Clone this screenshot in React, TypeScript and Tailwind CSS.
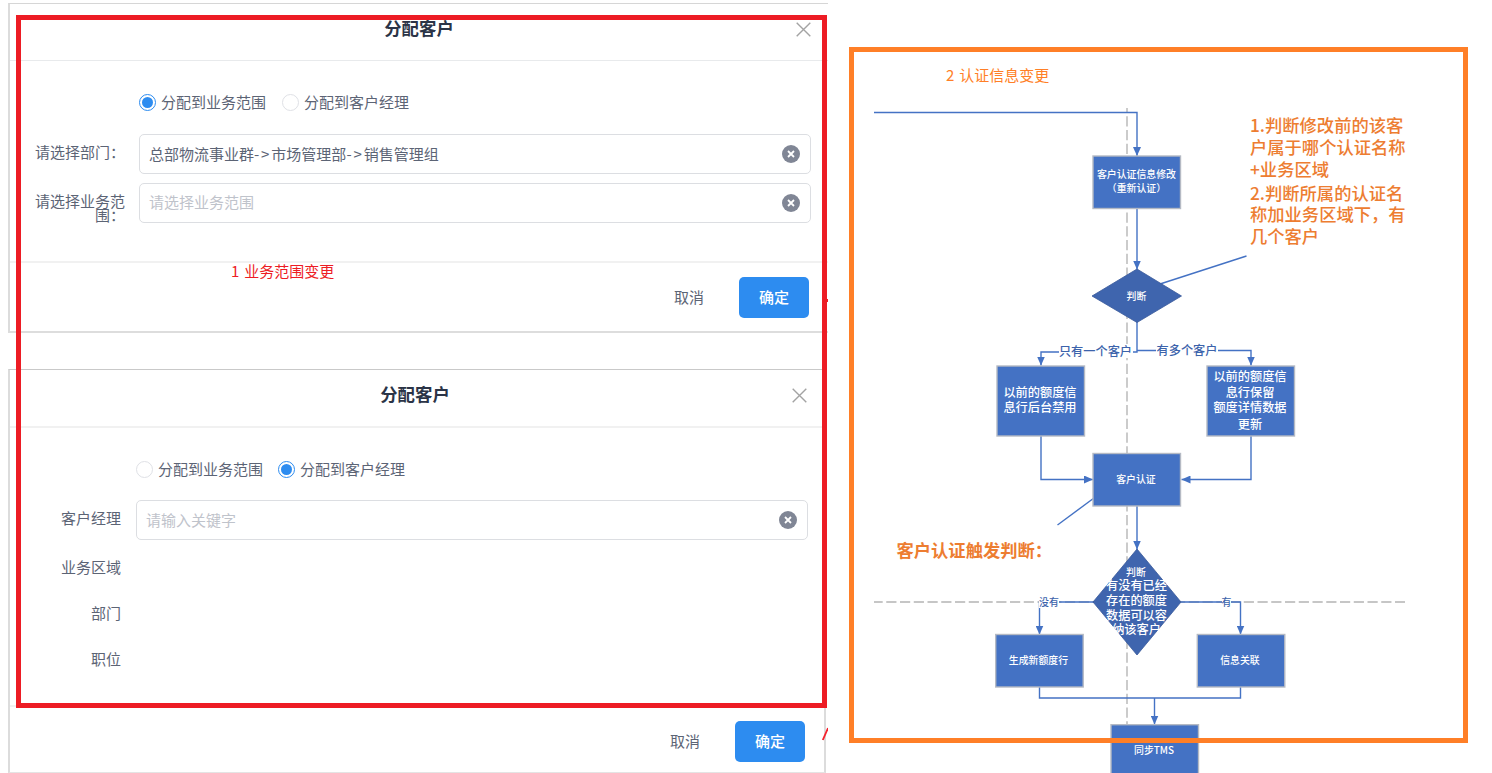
import type { ReactNode } from "react";

const FONT = "font-['Noto_Sans_CJK_SC',sans-serif]";

function Radio({ checked, label }: { checked?: boolean; label: string }) {
  return (
    <label className="flex items-center gap-[5px]">
      <span
        className={
          checked
            ? "flex size-[17px] items-center justify-center rounded-full border border-[#2d8cf0] bg-white"
            : "flex size-[17px] items-center justify-center rounded-full border border-[#dfe1e6] bg-white"
        }
      >
        {checked && <span className="size-[11px] rounded-full bg-[#2d8cf0]" />}
      </span>
      <span>{label}</span>
    </label>
  );
}

function Field({ value, placeholder, raised }: { value?: string[]; placeholder?: string; raised?: boolean }) {
  return (
    <div className="flex h-10 w-[672px] items-center justify-between rounded-[5px] border border-[#dcdee2] pr-[10px] pl-[9px]">
      {value ? (
        <span>
          {value.map((part, i) => (
            <span key={part}>
              {i > 0 && <span className="tracking-[1.9px]">-&gt;</span>}
              {part}
            </span>
          ))}
        </span>
      ) : (
        <span className={raised ? "-mt-px text-[#bfc3cb]" : "mt-px text-[#bfc3cb]"}>{placeholder}</span>
      )}
      <svg width="18" height="18" viewBox="0 0 18 18">
        <circle cx="9" cy="9" r="9" fill="#808695" />
        <path d="M6 6l6 6M12 6l-6 6" stroke="#fff" strokeWidth="1.8" />
      </svg>
    </div>
  );
}

function CloseIcon() {
  return (
    <svg width="15" height="15" viewBox="0 0 15 15">
      <path d="M.7.7l13.6 13.6M14.3.7L.7 14.3" stroke="#a3a3a3" strokeWidth="1.4" fill="none" />
    </svg>
  );
}

function Header({ className }: { className: string }) {
  return (
    <div className={`flex items-center justify-between ${className}`}>
      <span className="w-[15px]" />
      <h2 className="-mt-1 text-[17.4px] leading-5 font-bold text-[#2b3447]">分配客户</h2>
      <CloseIcon />
    </div>
  );
}

function Footer({ className }: { className: string }) {
  return (
    <div className={`flex items-start justify-end ${className}`}>
      <button className="h-[41px] w-[70px] text-[15px]">取消</button>
      <button className="ml-[15px] h-[41px] w-[70px] rounded-[5px] bg-[#2d8cf0] text-[15px] font-medium text-white">
        确定
      </button>
    </div>
  );
}

function Row({ label, className, children }: { label: ReactNode; className: string; children?: ReactNode }) {
  return (
    <div className={`flex ${className}`}>
      {label}
      {children}
    </div>
  );
}

function RangeDialog() {
  return (
    <section className="h-[330px] w-[820px] border-t border-b-2 border-l-2 border-t-[#d6d6d6] border-b-[#dddddd] border-l-[#dcdcdc]">
      <Header className="h-[57px] border-b border-[#e8eaec] pr-[17px] pl-[17px] pb-[5px]" />
      <div className="h-[202px] border-b-2 border-[#f1f1f1] pt-[30px] pl-[25px]">
        <div className="flex h-[22px] items-center gap-[16px] pl-[104px]">
          <Radio checked label="分配到业务范围" />
          <Radio label="分配到客户经理" />
        </div>
        <Row
          className="mt-[21px] h-10"
          label={
            <span lang="zh-CN" className="mr-[14px] w-[90px] pt-[7px] text-right leading-[22px] whitespace-nowrap">
              请选择部门：
            </span>
          }
        >
          <Field value={["总部物流事业群", "市场管理部", "销售管理组"]} />
        </Row>
        <Row
          className="mt-[9px] h-10"
          label={
            <span lang="zh-CN" className="mr-[14px] w-[90px] pt-[11px] text-right leading-[14px] whitespace-nowrap">
              请选择业务范
              <br />
              围：
            </span>
          }
        >
          <Field placeholder="请选择业务范围" raised />
        </Row>
      </div>
      <Footer className="pt-[14px] pr-[19px]" />
    </section>
  );
}

function ManagerDialog() {
  return (
    <section className="mt-9 h-[404px] w-[818px] border-t border-b border-x-2 border-x-[#dcdcdc] border-t-[#c9c9c9] border-b-[#e4e4e4]">
      <Header className="h-[58px] border-b-2 border-[#f1f1f1] pr-[17px] pl-[13px] pb-[5px]" />
      <div className="h-[279px] border-b-2 border-[#f1f1f1] pt-[30px] pl-[21px]">
        <div className="flex h-[22px] items-center gap-[15px] pl-[105px]">
          <Radio label="分配到业务范围" />
          <Radio checked label="分配到客户经理" />
        </div>
        <Row
          className="mt-5 h-10"
          label={<span className="mr-[15px] w-[90px] pt-[7px] text-right leading-[22px]">客户经理</span>}
        >
          <Field placeholder="请输入关键字" />
        </Row>
        {["业务区域", "部门", "职位"].map((t, i) => (
          <Row
            key={t}
            className={i === 0 ? "mt-4 h-[22px]" : "mt-6 h-[22px]"}
            label={<span className="w-[90px] text-right leading-[22px]">{t}</span>}
          />
        ))}
      </div>
      <Footer className="pt-[14px] pr-[19px]" />
    </section>
  );
}

const BLUE = "#4472c4";

function Box({ x, y, w = 87.5, h = 52.5 }: { x: number; y: number; w?: number; h?: number }) {
  return <rect x={x} y={y} width={w} height={h} fill={BLUE} stroke="#b5bac4" strokeWidth="1.4" />;
}

function Lines({
  x,
  lines,
  size,
  weight = 500,
  fill = "#fff",
  anchor = "middle",
}: {
  x: number;
  lines: [string, number][];
  size: number;
  weight?: number;
  fill?: string;
  anchor?: "middle" | "start";
}) {
  return (
    <>
      {lines.map(([t, cy]) => (
        <text key={t} x={x} y={cy + size * 0.37} fontSize={size} fontWeight={weight} fill={fill} textAnchor={anchor}>
          {t}
        </text>
      ))}
    </>
  );
}

function FlowChart() {
  return (
    <svg className={FONT} width="664" height="773" viewBox="828 0 664 773">
      <defs>
        <marker id="arrow" markerUnits="userSpaceOnUse" markerWidth="9" markerHeight="8" refX="9" refY="4" orient="auto">
          <path d="M0 0L9 4L0 8z" fill={BLUE} />
        </marker>
      </defs>

      <g stroke="#c6c6c6" strokeWidth="1.8" strokeDasharray="10.2 3.55">
        <path d="M1127 108V727" strokeDashoffset="5.4" />
        <path d="M874 602H1405" strokeDashoffset="1.5" />
      </g>

      <g stroke={BLUE} strokeWidth="1.4" fill="none">
        <path d="M874 112.5H1137V156" markerEnd="url(#arrow)" />
        <path d="M1137 208V269.500" markerEnd="url(#arrow)" />
        <path d="M1160 284L1246.500 256" />
        <path d="M1137 322V352H1041V365.500" markerEnd="url(#arrow)" />
        <path d="M1137 350.500H1251V365.500" markerEnd="url(#arrow)" />
        <path d="M1041 436V479.500H1093" markerEnd="url(#arrow)" />
        <path d="M1251 436V479.500H1181.500" markerEnd="url(#arrow)" />
        <path d="M1137 506V549.500" markerEnd="url(#arrow)" />
        <path d="M1057.500 525L1094 498" />
        <path d="M1094 602H1039.500V634.500" markerEnd="url(#arrow)" />
        <path d="M1181 602H1240.500V634.500" markerEnd="url(#arrow)" />
        <path d="M1039.500 687V698H1240.500V687" />
        <path d="M1154.500 698V724.500" markerEnd="url(#arrow)" />
      </g>

      <g fill="#fff">
        <rect x="1059" y="344" width="74" height="14" />
        <rect x="1156" y="344" width="62" height="13" />
        <rect x="1039" y="596" width="20" height="12" />
        <rect x="1222" y="596" width="9" height="12" />
      </g>

      <Box x={1093} y={156} />
      <Box x={997} y={366} h={70} />
      <Box x={1207} y={366} h={70} />
      <Box x={1093} y={453.5} />
      <Box x={995.7} y={634.5} />
      <Box x={1197.3} y={634.5} />
      <Box x={1111} y={724.7} h={60} />
      <g fill="#3f65ae" stroke="#38599b" strokeWidth="0.8">
        <path d="M1137 269L1181.500 296L1137 322.500L1092 296z" />
        <path d="M1137 549L1181 602L1137 655L1093 602z" />
      </g>

      <Lines x={1136.5} size={9.9} lines={[["客户认证信息修改", 174.5], ["（重新认证）", 188.5]]} />
      <Lines x={1136.5} size={9.9} lines={[["判断", 296]]} />
      <Lines x={1040} size={12.2} lines={[["以前的额度信", 392.5], ["息行后台禁用", 407.5]]} />
      <Lines
        x={1250}
        size={12.2}
        lines={[["以前的额度信", 376.5], ["息行保留", 392.5], ["额度详情数据", 407.5], ["更新", 424]]}
      />
      <Lines x={1136} size={9.9} lines={[["客户认证", 479.5]]} />
      <Lines x={1136} size={9.9} lines={[["判断", 572]]} />
      <Lines
        x={1136.5}
        size={12.2}
        lines={[["有没有已经", 585], ["存在的额度", 600], ["数据可以容", 615], ["纳该客户", 629.5]]}
      />
      <Lines x={1038.5} size={9.9} lines={[["生成新额度行", 660.5]]} />
      <Lines x={1240} size={9.9} lines={[["信息关联", 660.5]]} />
      <Lines x={1154} size={9.9} lines={[["同步TMS", 750.5]]} />

      <Lines x={1095.5} size={12.2} fill="#3c63ab" lines={[["只有一个客户", 351]]} />
      <Lines x={1187} size={12.2} fill="#3c63ab" lines={[["有多个客户", 350]]} />
      <Lines x={1049} size={9.9} fill="#3c63ab" lines={[["没有", 602]]} />
      <Lines x={1226.5} size={9.9} fill="#3c63ab" lines={[["有", 602]]} />

      <Lines
        x={1250}
        size={17.3}
        weight={500}
        fill="#ed7d31"
        anchor="start"
        lines={[
          ["1.判断修改前的该客", 126],
          ["户属于哪个认证名称", 147.5],
          ["+业务区域", 170],
          ["2.判断所属的认证名", 194],
          ["称加业务区域下，有", 215],
          ["几个客户", 237],
        ]}
      />
      <Lines x={896.5} size={17.3} weight={700} fill="#ed7d31" anchor="start" lines={[["客户认证触发判断：", 550.5]]} />
    </svg>
  );
}

export default function App() {
  return (
    <main className={`relative flex h-[773px] w-[1492px] overflow-hidden bg-white text-[15px] text-[#5c6475] ${FONT}`}>
      <div className="h-[773px] w-[828px] overflow-hidden pt-[3px] pl-2">
        <RangeDialog />
        <ManagerDialog />
      </div>
      <FlowChart />

      <svg className="absolute top-[725px] left-[822px]" width="6" height="16" viewBox="0 0 6 16">
        <path d="M.8 15L6 3" stroke="#f5222d" strokeWidth="1.8" />
      </svg>
      <span className="absolute top-[299px] left-[827px] h-[3px] w-px bg-[#ed1c24]" />
      <div className="absolute top-[15px] left-4 h-[693px] w-[811px] border-[5px] border-[#ed1c24]" />
      <div className="absolute top-[47px] left-[849px] h-[696px] w-[619px] border-[5px] border-[#ff7f27]" />
      <span className="absolute top-[260px] left-[231px] flex gap-[5px] leading-[22px] text-[#ed1c24]">
        <span>1</span>
        <span>业务范围变更</span>
      </span>
      <span className="absolute top-[64px] left-[946px] flex gap-[5px] leading-[22px] text-[#ff7f27]">
        <span>2</span>
        <span>认证信息变更</span>
      </span>
    </main>
  );
}
